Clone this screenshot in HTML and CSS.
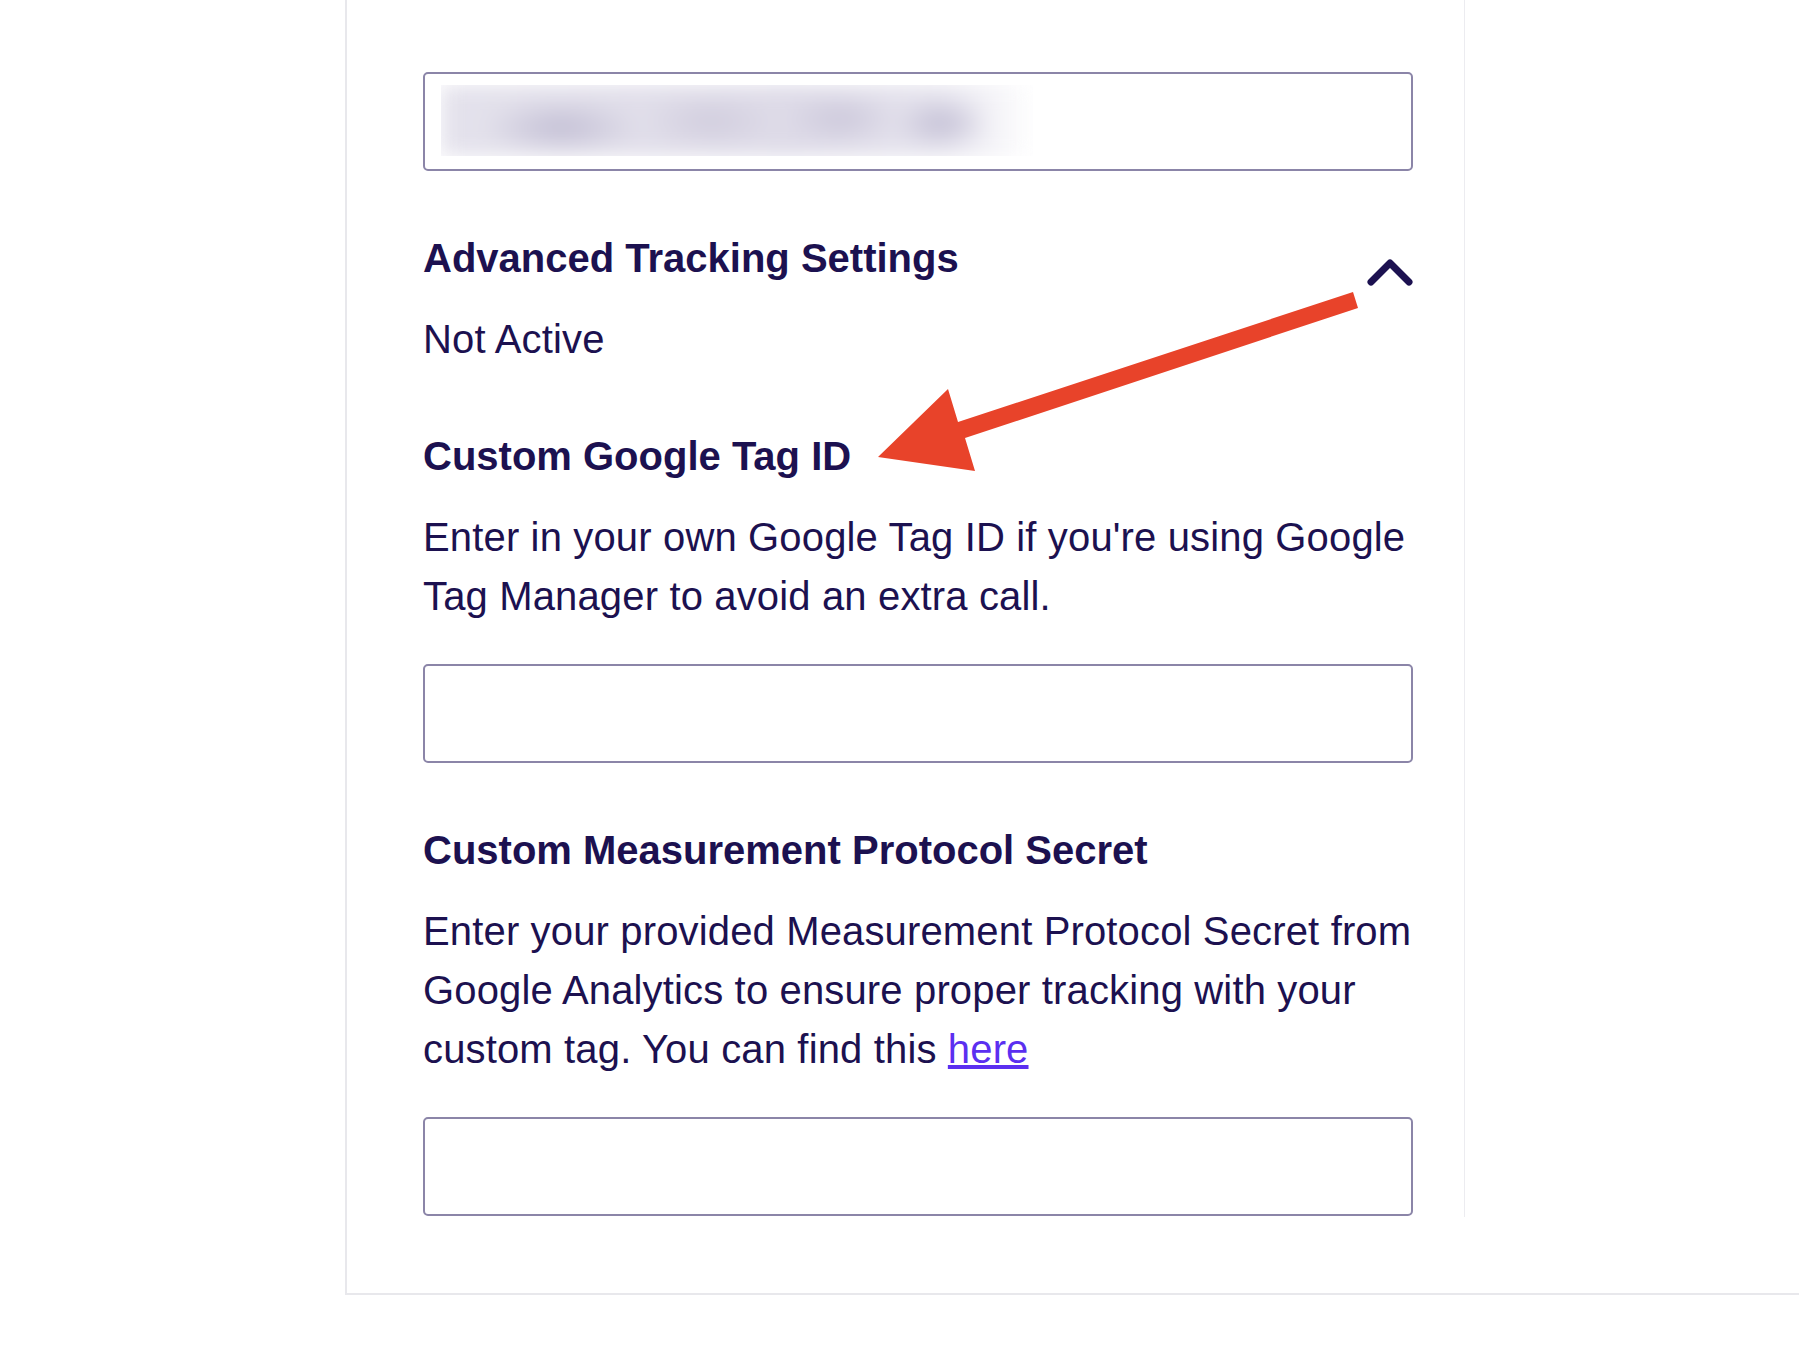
FILE: index.html
```html
<!DOCTYPE html>
<html lang="en">
<head>
  <meta charset="UTF-8">
  <meta name="viewport" content="width=device-width, initial-scale=1.0">
  <title>Tracking Settings</title>
  <link rel="stylesheet" href="styles.css">
</head>
<body>
  <div class="panel">
    <div class="column">
      <div class="text-field">
        <div class="redacted"><div class="redacted-blur"></div></div>
      </div>

      <section class="field">
        <div class="field-head">
          <h3>Advanced Tracking Settings</h3>
          <button class="toggle" type="button" aria-label="Collapse">
            <svg width="48" height="30" viewBox="0 0 48 30">
              <polyline points="5,25 24,6 43,25" fill="none" stroke="#1c1150" stroke-width="7" stroke-linecap="round" stroke-linejoin="round"/>
            </svg>
          </button>
        </div>
        <p class="status">Not Active</p>
      </section>

      <section class="field">
        <h3>Custom Google Tag ID</h3>
        <p class="desc">Enter in your own Google Tag ID if you're using Google Tag Manager to avoid an extra call.</p>
        <div class="text-field"></div>
      </section>

      <section class="field">
        <h3>Custom Measurement Protocol Secret</h3>
        <p class="desc">Enter your provided Measurement Protocol Secret from Google Analytics to ensure proper tracking with your custom tag. You can find this <a href="#">here</a></p>
        <div class="text-field"></div>
      </section>
    </div>
  </div>

  <!-- annotation arrow drawn over the page -->
  <svg class="callout-arrow" width="1799" height="1371" viewBox="0 0 1799 1371">
    <polygon points="878,457 948,389 958,422 1353,292 1358,308 965,438 975,471" fill="#e8432a"/>
  </svg>
</body>
</html>
```

FILE: styles.css
```css
* {
  margin: 0;
  padding: 0;
  box-sizing: border-box;
}
body {
  font-family: 'Liberation Sans', Arial, sans-serif;
  background-color: #fff;
  color: #1c1150;
  position: relative;
  min-height: 1371px;
}
.panel {
  margin-left: 345px;
  border-left: 2px solid #e8e8ec;
  border-bottom: 2px solid #e8e8ec;
  padding-bottom: 76px;
}
.column {
  width: 1118px;
  padding: 72px 51px 1px 76px;
  border-right: 1px solid #ececf0;
}
.text-field {
  height: 99px;
  border: 2px solid #8b85a8;
  border-radius: 5px;
  padding: 11px 16px;
  background-color: #fff;
}
.redacted {
  width: 592px;
  height: 71px;
  overflow: hidden;
}
.redacted-blur {
  width: 100%;
  height: 100%;
  filter: blur(10px);
  background:
    radial-gradient(ellipse 80px 28px at 120px 42px, #c2bed4 0%, rgba(194,190,212,0) 100%),
    radial-gradient(ellipse 70px 26px at 270px 36px, #d0ccdd 0%, rgba(208,204,221,0) 100%),
    radial-gradient(ellipse 60px 26px at 400px 34px, #cbc7da 0%, rgba(203,199,218,0) 100%),
    radial-gradient(ellipse 50px 26px at 500px 38px, #c2bed4 0%, rgba(194,190,212,0) 100%),
    linear-gradient(to right, #e4e2ec 0%, #dedbe8 60%, #e6e4ee 85%, #ffffff 100%);
}
.field {
  margin-top: 63px;
}
.field-head {
  display: flex;
  justify-content: space-between;
  align-items: flex-start;
}
h3 {
  font-size: 40px;
  line-height: 48px;
  font-weight: 700;
  margin-bottom: 28px;
}
.toggle {
  background: none;
  border: none;
  margin-top: 23px;
  margin-right: -1px;
  cursor: pointer;
  display: block;
}
.toggle svg {
  display: block;
}
.status,
.desc {
  font-size: 40px;
  line-height: 59px;
  letter-spacing: 0.15px;
}
.desc {
  margin-bottom: 38px;
}
.desc a {
  color: #5b2ff0;
}
.callout-arrow {
  position: absolute;
  left: 0;
  top: 0;
  pointer-events: none;
}
```
